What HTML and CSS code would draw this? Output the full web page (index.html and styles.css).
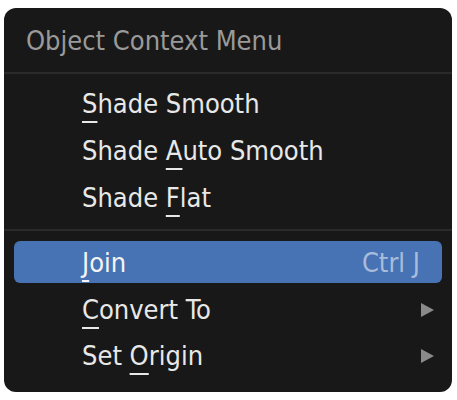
FILE: index.html
```html
<!DOCTYPE html>
<html>
<head>
<meta charset="utf-8">
<link rel="stylesheet" href="styles.css">
</head>
<body>
<div class="menu">
  <div class="menu-title">Object Context Menu</div>
  <div class="group group-first">
    <div class="item"><span class="label"><u>S</u>hade Smooth</span></div>
    <div class="item"><span class="label">Shade <u>A</u>uto Smooth</span></div>
    <div class="item"><span class="label">Shade <u>F</u>lat</span></div>
  </div>
  <div class="sep"></div>
  <div class="group group-second">
    <div class="item item-active"><span class="label"><u>J</u>oin</span><span class="shortcut">Ctrl J</span></div>
    <div class="item"><span class="label"><u>C</u>onvert To</span><span class="arrow"></span></div>
    <div class="item"><span class="label">Set <u>O</u>rigin</span><span class="arrow"></span></div>
  </div>
</div>
</body>
</html>
```
FILE: styles.css
```css
html, body {
  margin: 0;
  padding: 0;
  background: #ffffff;
}
body {
  font-family: "DejaVu Sans Condensed", "DejaVu Sans", sans-serif;
}
.menu {
  margin: 8px 0 0 4px;
  width: 448px;
  height: 384px;
  background: #181818;
  border-radius: 12px;
  box-sizing: border-box;
  display: flex;
  flex-direction: column;
}
.menu-title {
  height: 64px;
  border-bottom: 2px solid #2a2a2a;
  display: flex;
  align-items: center;
  padding-left: 22px;
  color: #9a9a9a;
  font-size: 27px;
  line-height: 1;
}
.group-first {
  padding-top: 6px;
  padding-bottom: 8px;
}
.group-first .item {
  height: 47px;
}
.sep {
  height: 2px;
  background: #2a2a2a;
}
.group-second {
  padding-top: 10px;
}
.item {
  height: 46px;
  margin: 0 10px;
  padding-left: 68px;
  padding-right: 8px;
  display: flex;
  align-items: center;
  justify-content: space-between;
  color: #e8e8e8;
  font-size: 27px;
  line-height: 1;
  border-radius: 6px;
}
.item-active {
  height: 42px;
  margin-bottom: 3px;
  background: #4772b3;
  color: #f4f4f4;
}
.label u {
  text-decoration: underline;
  text-decoration-thickness: 2px;
  text-underline-offset: 8px;
}
.shortcut {
  color: #a9bcdc;
  padding-right: 14px;
}
.arrow {
  width: 0;
  height: 0;
  margin-top: 2px;
  border-top: 7px solid transparent;
  border-bottom: 7px solid transparent;
  border-left: 13px solid #8a8a8a;
}
```
